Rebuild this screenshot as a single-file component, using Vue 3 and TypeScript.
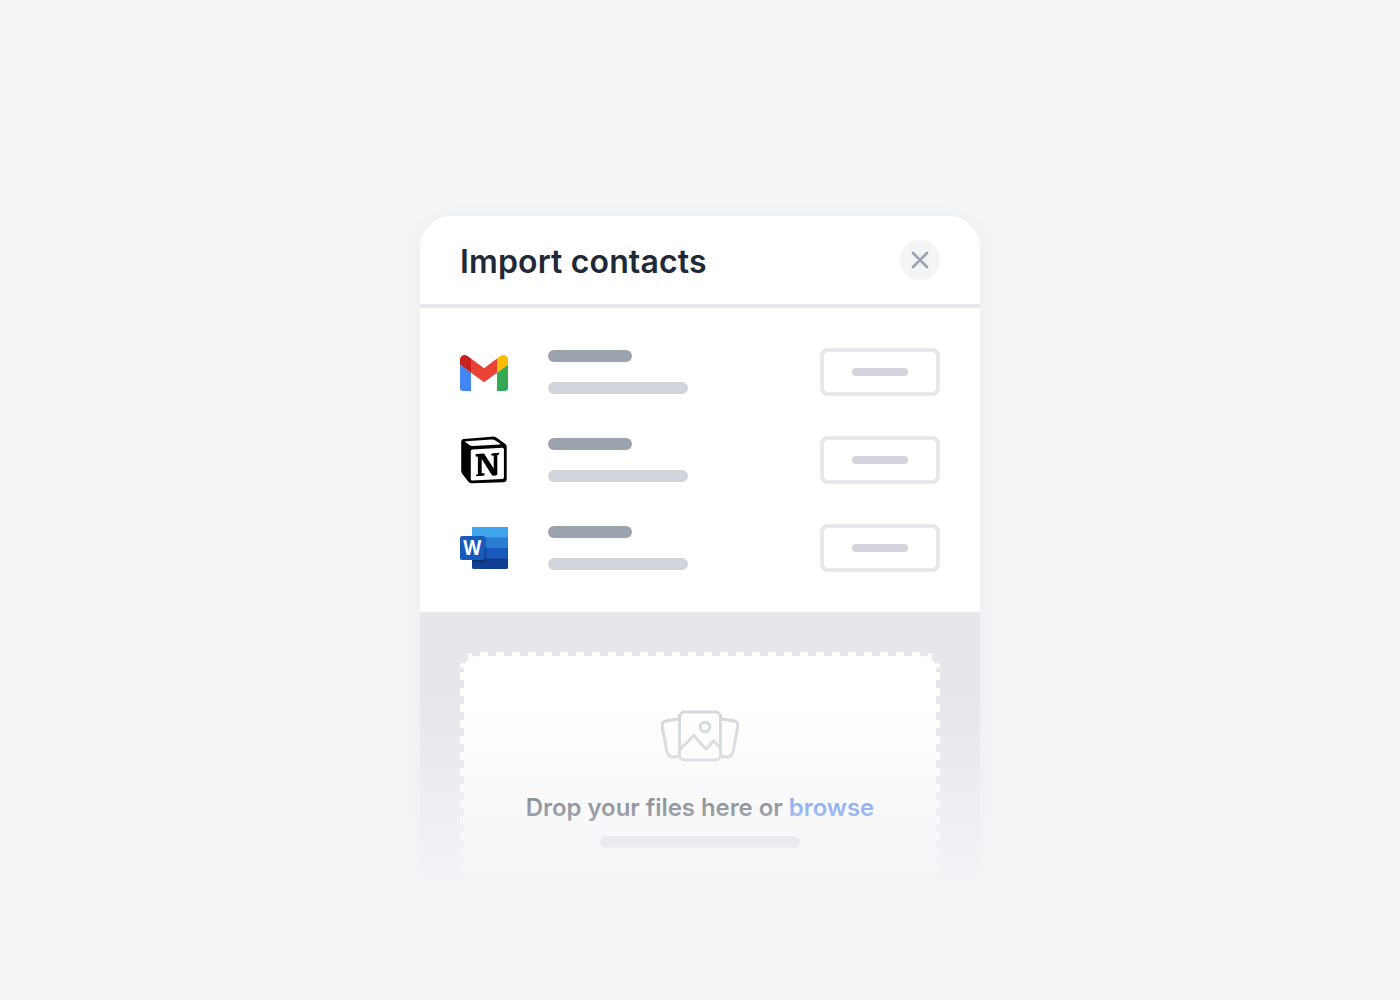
<script setup lang="ts">
interface Source {
  id: 'gmail' | 'notion' | 'word'
  label: string
}

const sources: Source[] = [
  { id: 'gmail', label: 'Gmail' },
  { id: 'notion', label: 'Notion' },
  { id: 'word', label: 'Word' },
]
</script>

<template>
  <main class="stage">
    <section class="card">
      <header class="head">
        <h1 class="title">Import contacts</h1>
        <button class="close" type="button" aria-label="Close">
          <svg width="40" height="40" viewBox="0 0 40 40" fill="none">
            <path d="M13 13 27 27M27 13 13 27" stroke="#9ca3af" stroke-width="2.7" stroke-linecap="round" />
          </svg>
        </button>
      </header>

      <ul class="sources">
        <li v-for="s in sources" :key="s.id" class="source">
          <svg v-if="s.id === 'gmail'" class="logo" viewBox="0 0 48 48">
            <path fill="#4285f4" d="M0 16.500 11 24.700V43H3.300A3.300 3.300 0 0 1 0 39.700Z" />
            <path fill="#34a853" d="M48 16.500 37 24.700V43H44.700A3.300 3.300 0 0 0 48 39.700Z" />
            <path fill="#c5221f" d="M0 11.900v4.600l11 8.200V10.600L7.900 8.200C4.600 5.700 0 7.800 0 11.900Z" />
            <path fill="#fbbc04" d="M48 11.900v4.600l-11 8.200V10.600l3.100-2.400C43.400 5.700 48 7.800 48 11.900Z" />
            <path fill="#ea4335" d="M11 10.600 24 20.300 37 10.600V24.700L24 34.300 11 24.700Z" />
          </svg>
          <svg v-else-if="s.id === 'notion'" class="logo" viewBox="0 0 48 48">
            <path fill="#000" d="M3.800 3 31.200.7Q34.600.3 37 2L45 7.700Q46.700 9 46.700 10.500V43Q46.700 46 43.500 46.300L12 47.200Q9.500 47.400 8 45.300L2.400 38Q1.200 36.300 1.200 34.500V6Q1.200 3.300 3.800 3Z" />
            <path fill="#fff" d="M6.200 5.300 31.500 3.500Q33.700 3.300 35.400 4.400L40.200 7.700Q41 8.400 39.800 8.500L13 10.100Q10.800 10.200 9.400 9.100L5.500 6.200Q4.900 5.500 6.200 5.300Z" />
            <path fill="#fff" d="M12.400 13.400 42.300 11.700Q43.900 11.600 43.900 13.300V41.300Q43.900 42.800 42.300 42.900L12.500 44.600Q10.800 44.700 10.800 43V15.200Q10.800 13.500 12.400 13.400Z" />
            <path fill="#000" d="M16 18.100 24 17.500 33.700 32.600V19.700L31 19.300Q31 17.400 32.900 17.200L39.400 16.800Q39.500 18.800 37.300 19.300V38.700Q35.500 39.800 34 39.800 32.400 39.800 31.300 38.200L21.700 23.100V37L25 37.800Q25 39.700 23 39.800L16 40.200Q15.700 38.300 17.900 37.900V20.700L15.700 20.500Q15.300 18.300 16 18.100Z" />
          </svg>
          <svg v-else class="logo" viewBox="0 0 48 48">
            <rect x="12" y="3" width="36" height="42" rx="2" fill="#185abd" />
            <path fill="#41a5ee" d="M14 3h32a2 2 0 0 1 2 2v9H12V5a2 2 0 0 1 2-2Z" />
            <path fill="#2b7cd3" d="M12 13.500h36V24H12Z" />
            <path fill="#103f91" d="M12 34.500h36V43a2 2 0 0 1-2 2H14a2 2 0 0 1-2-2Z" />
            <path fill="#000" opacity=".2" d="M12 12h12.300A2.200 2.200 0 0 1 26.500 14.200V36a2.200 2.200 0 0 1-2.200 2.200H12Z" />
            <rect y="12" width="24.500" height="24" rx="2" fill="#185abd" />
            <text x="3.200" y="31.300" class="word-letter" textLength="18" lengthAdjust="spacingAndGlyphs">W</text>
          </svg>
          <div class="lines">
            <span class="bar strong"></span>
            <span class="bar soft"></span>
          </div>
          <button class="action" type="button" :aria-label="s.label"><span class="pill"></span></button>
        </li>
      </ul>

      <div class="upload">
        <div class="drop">
          <svg class="dashes" width="480" height="248" viewBox="0 0 480 248" fill="none" stroke="#e5e7eb" stroke-width="4">
            <path d="M20 2H460" stroke-dasharray="8 8" stroke-dashoffset="8" />
            <path d="M2 20V248M478 20V248" stroke-dasharray="8 8" stroke-dashoffset="8" />
            <path d="M20 2H16A14 14 0 0 0 2 16V20" stroke-dasharray="8 4.670" />
            <path d="M460 2H464A14 14 0 0 1 478 16V20" stroke-dasharray="8 4.670" />
          </svg>
          <svg class="pictures" width="80" height="52" viewBox="0 0 80 52" fill="none" stroke="#d1d5db" stroke-width="3" stroke-linejoin="round" stroke-linecap="round">
            <path d="M19 8.900 6.800 10.700Q1.400 11.500 2.300 17L6.800 41Q8 47.400 14 47.100L19 46.300" />
            <path d="M61 8.900 73.200 10.700Q78.600 11.500 77.700 17L73.200 41Q72 47.400 66 47.100L61 46.300" />
            <rect x="19.500" y="2" width="41" height="48" rx="5" />
            <circle cx="45" cy="17" r="4.800" />
            <path d="M20 39.500 33.700 25.500 46 39 53.700 31 60 37.500" />
          </svg>
          <p class="hint">Drop your files here or <a class="browse">browse</a></p>
          <span class="note"></span>
        </div>
      </div>
    </section>
    <div class="fade"></div>
  </main>
</template>

<style>
body {
  margin: 0;
  background: #f3f4f6;
}
</style>

<style scoped>
.stage {
  position: relative;
  box-sizing: border-box;
  width: 1400px;
  height: 1000px;
  padding-top: 216px;
  overflow: hidden;
  background: #f3f4f6;
  font-family: Inter, sans-serif;
}
.card {
  width: 560px;
  height: 684px;
  margin: 0 auto;
  border-radius: 32px 32px 0 0;
  overflow: hidden;
  background: #fff;
  box-shadow: 0 8px 32px rgba(0, 0, 0, 0.035);
}
.head {
  display: flex;
  align-items: center;
  justify-content: space-between;
  height: 88px;
  padding: 0 40px;
  border-bottom: 4px solid #e5e7eb;
}
.title {
  margin: 0;
  padding-top: 3px;
  color: #1f2937;
  font-size: 32px;
  font-weight: 600;
  line-height: 40px;
  letter-spacing: 0.14px;
}
.close {
  width: 40px;
  height: 40px;
  padding: 0;
  border: 0;
  border-radius: 50%;
  background: #f3f4f6;
}
.close svg {
  display: block;
}
.sources {
  display: flex;
  flex-direction: column;
  gap: 40px;
  margin: 0;
  padding: 40px;
  list-style: none;
}
.source {
  display: flex;
  align-items: center;
  height: 48px;
}
.logo {
  width: 48px;
  height: 48px;
}
.word-letter {
  fill: #fff;
  font-family: "Open Sans", sans-serif;
  font-size: 20.5px;
  font-weight: 700;
}
.lines {
  display: flex;
  flex: 1;
  flex-direction: column;
  gap: 20px;
  margin-left: 40px;
}
.bar {
  height: 12px;
  border-radius: 6px;
}
.strong {
  width: 84px;
  background: #9ca3af;
}
.soft {
  width: 140px;
  background: #d1d5db;
}
.action {
  display: flex;
  align-items: center;
  justify-content: center;
  box-sizing: border-box;
  width: 120px;
  height: 48px;
  padding: 0;
  border: 4px solid #e5e7eb;
  border-radius: 8px;
  background: #fff;
}
.pill {
  width: 56px;
  height: 8px;
  border-radius: 4px;
  background: #d1d5db;
}
.upload {
  height: 288px;
  box-sizing: border-box;
  padding: 40px 40px 0;
  background: #e5e7eb;
}
.drop {
  position: relative;
  display: flex;
  flex-direction: column;
  align-items: center;
  box-sizing: border-box;
  height: 248px;
  padding-top: 58px;
  border-radius: 16px 16px 0 0;
  background: #fff;
}
.dashes {
  position: absolute;
  top: 0;
  left: 0;
}
.hint {
  margin: 30px 0 0;
  color: #1f2937;
  font-size: 24px;
  font-weight: 600;
  line-height: 32px;
  letter-spacing: -0.055px;
  white-space: nowrap;
}
.browse {
  color: #2563eb;
}
.note {
  width: 200px;
  height: 12px;
  margin-top: 12px;
  border-radius: 6px;
  background: #d1d5db;
}
.fade {
  position: absolute;
  top: 696px;
  left: 0;
  width: 100%;
  height: 304px;
  background: linear-gradient(rgba(243, 244, 246, 0), #f3f4f6 200px);
}
</style>
